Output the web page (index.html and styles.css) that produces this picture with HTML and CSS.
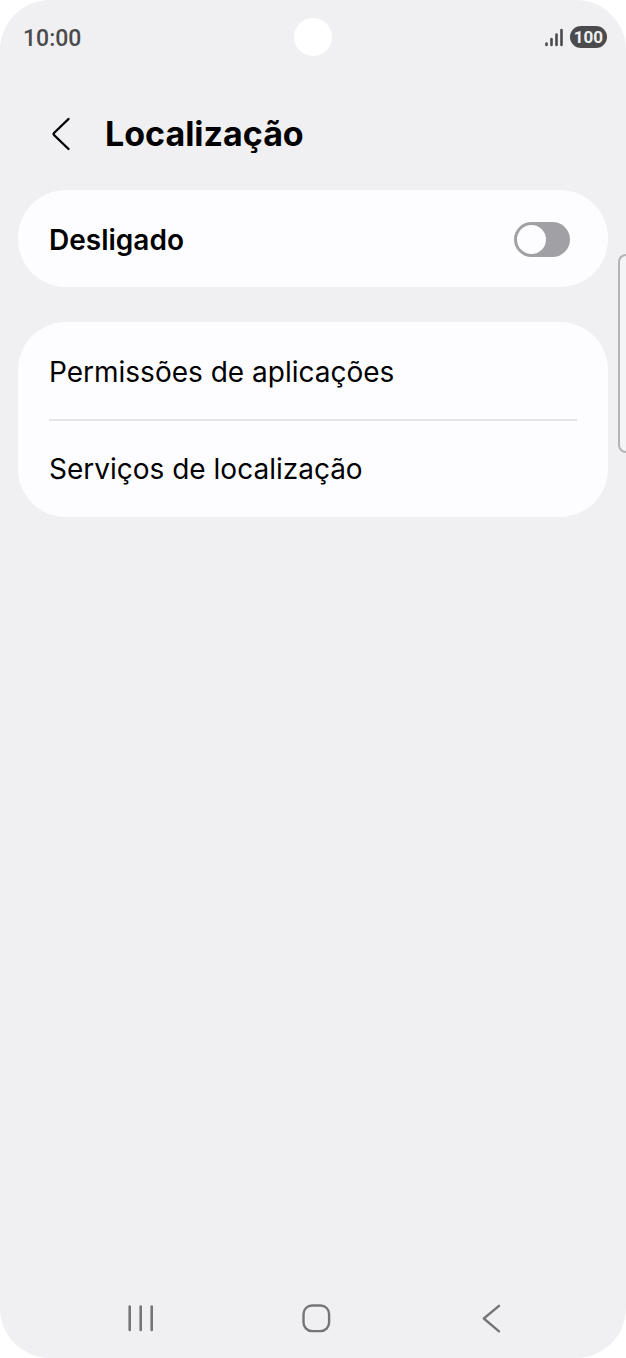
FILE: index.html
```
<!DOCTYPE html>
<html lang="pt">
<head>
  <meta charset="UTF-8">
  <meta name="viewport" content="width=device-width, initial-scale=1.0">
  <title>Localização</title>
  <link rel="stylesheet" href="styles.css">
</head>
<body>
  <div class="screen">
    <!-- status bar -->
    <div class="status">
      <span class="time">10:00</span>
      <span class="camera"></span>
      <div class="status-right">
        <svg width="20" height="20" viewBox="0 0 20 20" fill="none" stroke="#4b4b4d" stroke-width="2.600" stroke-linecap="round">
          <path d="M2.500 16.500v1.500M7.500 12v6M12.500 7.500v10.500M17.500 3v15"/>
        </svg>
        <span class="battery">100</span>
      </div>
    </div>

    <header class="header">
      <button class="back" type="button" aria-label="Voltar">
        <svg width="20" height="34" viewBox="0 0 20 34" fill="none" stroke="#000" stroke-width="2.4" stroke-linecap="round" stroke-linejoin="round">
          <path d="M17.500 2L3 16Q2 17 3 18L17.500 32"/>
        </svg>
      </button>
      <h1>Localização</h1>
    </header>

    <main class="content">
      <section class="card">
        <label class="row" for="location">
          <span class="strong">Desligado</span>
          <input class="switch" id="location" type="checkbox" role="switch">
        </label>
      </section>
      <section class="card">
        <a class="row" href="#">Permissões de aplicações</a>
        <a class="row" href="#">Serviços de localização</a>
      </section>
    </main>

    <!-- navigation bar -->
    <nav class="nav">
      <button type="button" aria-label="Recentes">
        <svg width="30" height="30" viewBox="0 0 30 30" fill="none" stroke="#757577" stroke-width="2.600" stroke-linecap="round">
          <path d="M3.700 3.500v23.500M14.700 3.500v23.500M25.700 3.500v23.500"/>
        </svg>
      </button>
      <button type="button" aria-label="Início">
        <svg width="30" height="30" viewBox="0 0 30 30" fill="none" stroke="#757577" stroke-width="2.400">
          <rect x="1.500" y="2.500" width="25.600" height="25.600" rx="8.500"/>
        </svg>
      </button>
      <button type="button" aria-label="Anterior">
        <svg width="30" height="30" viewBox="0 0 30 30" fill="none" stroke="#757577" stroke-width="2.400" stroke-linecap="round" stroke-linejoin="round">
          <path d="M22 2.800L6.800 15.500L22 28.300"/>
        </svg>
      </button>
    </nav>

    <div class="edge-panel"></div>
  </div>
</body>
</html>
```
FILE: styles.css
```
* {
  margin: 0;
  padding: 0;
  box-sizing: border-box;
}
body {
  background: #fff;
  color: #000;
  font-family: Inter, "Noto Sans", sans-serif;
  font-size: 28px;
  line-height: 36px;
}
button {
  display: flex;
  border: none;
  background: none;
  cursor: pointer;
}
.screen {
  position: relative;
  display: flex;
  flex-direction: column;
  min-height: 100vh;
  overflow: hidden;
  border-radius: 50px;
  background: #f0f0f2;
}
.status {
  display: grid;
  grid-template-columns: 1fr auto 1fr;
  align-items: center;
  height: 74px;
  padding: 0 19px;
  color: #4b4b4d;
  font-family: Roboto, sans-serif;
}
.time {
  padding: 4px 0 0 4px;
  font-size: 23px;
  font-weight: 500;
}
.camera {
  width: 38px;
  height: 38px;
  border-radius: 50%;
  background: #fff;
}
.status-right {
  display: flex;
  justify-content: flex-end;
  align-items: center;
  gap: 6px;
}
.battery {
  padding: 0 4px;
  border-radius: 11px;
  background: #4b4b4d;
  color: #f0f0f2;
  font-size: 17px;
  font-weight: 700;
  line-height: 22px;
}
.header {
  display: flex;
  align-items: center;
  gap: 34px;
  height: 116px;
  padding: 4px 51px 0;
}
.header h1 {
  font-size: 34px;
  font-weight: 700;
  line-height: 44px;
}
.content {
  display: flex;
  flex: 1;
  flex-direction: column;
  gap: 35px;
  padding: 0 18px;
}
.card {
  border-radius: 48px;
  background: #fdfdff;
}
.row {
  display: flex;
  justify-content: space-between;
  align-items: center;
  min-height: 97px;
  padding: 2px 38px 0 31px;
  color: inherit;
  text-decoration: none;
}
.row + .row {
  min-height: 98px;
  margin: 0 31px;
  padding: 0;
  border-top: 2px solid #e4e4e6;
}
.strong {
  font-weight: 600;
}
.switch {
  appearance: none;
  width: 56px;
  height: 35px;
  padding: 3px;
  border-radius: 18px;
  background: #a1a0a5;
  cursor: pointer;
}
.switch::before {
  content: "";
  display: block;
  width: 29px;
  height: 29px;
  border-radius: 50%;
  background: #fdfdff;
}
.switch:checked {
  background: #387aff;
}
.switch:checked::before {
  margin-left: auto;
}
.nav {
  display: flex;
  align-items: center;
  height: 80px;
  padding: 0 46px 0 53px;
}
.nav button {
  flex: 1;
  justify-content: center;
}
/* handle on the right edge, over the page */
.edge-panel {
  position: absolute;
  top: 254px;
  right: 0;
  width: 8px;
  height: 199px;
  border: 2px solid #b4b4b6;
  border-right: none;
  border-radius: 8px 0 0 8px;
  background: #f4f4f6;
}
```
